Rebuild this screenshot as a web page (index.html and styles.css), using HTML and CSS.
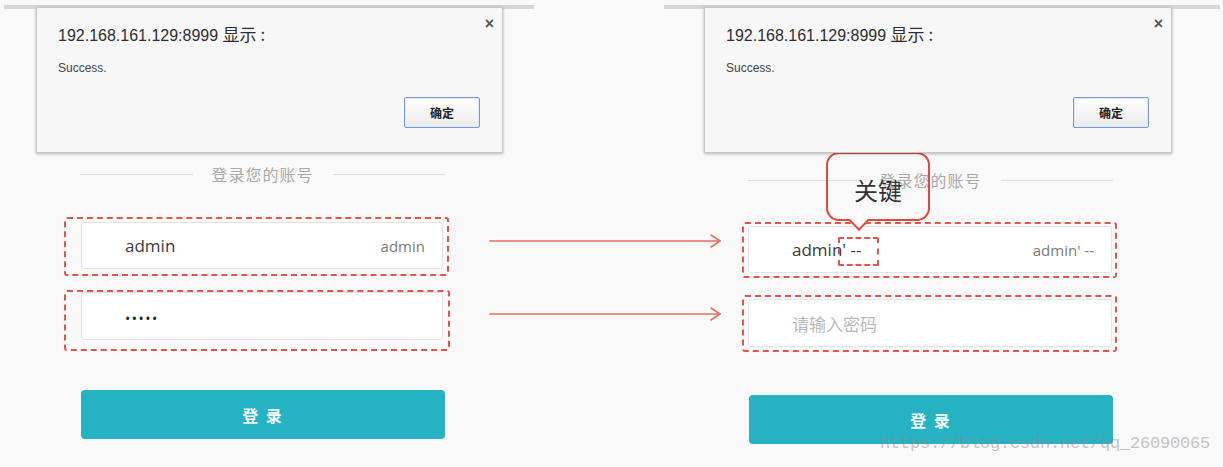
FILE: index.html
```html
<!DOCTYPE html>
<html lang="zh-CN">
<head>
<meta charset="utf-8">
<title>SQL 注入演示</title>
<link rel="stylesheet" href="styles.css">
</head>
<body>
<div class="stage">
  <section class="panel panel-left">
    <div class="topbar"></div>
    <div class="form form-left">
      <div class="heading"><span class="rule"></span><span class="heading-text">登录您的账号</span><span class="rule"></span></div>
      <div class="mark mark-l1">
        <div class="field"><span class="value">admin</span><span class="echo">admin</span></div>
      </div>
      <div class="mark mark-l2">
        <div class="field"><span class="dots">•••••</span></div>
      </div>
      <button class="login login-left">登 录</button>
    </div>
    <div class="dialog dialog-left">
      <span class="close">×</span>
      <div class="dlg-title">192.168.161.129:8999 <span class="cjk">显示 :</span></div>
      <div class="dlg-msg">Success.</div>
      <div class="dlg-actions"><button class="ok">确定</button></div>
    </div>
  </section>

  <section class="panel panel-right">
    <div class="topbar topbar-right"></div>
    <div class="form form-right">
      <div class="heading"><span class="rule"></span><span class="heading-text">登录您的账号</span><span class="rule"></span></div>
      <div class="mark mark-r">
        <div class="field"><span class="value">admin' --</span><span class="echo">admin' --</span><span class="key-box"></span></div>
      </div>
      <div class="mark mark-r mark-r2">
        <div class="field"><span class="placeholder">请输入密码</span></div>
      </div>
      <button class="login login-right">登 录</button>
    </div>
    <div class="callout">关键</div>
    <div class="dialog dialog-right">
      <span class="close">×</span>
      <div class="dlg-title">192.168.161.129:8999 <span class="cjk">显示 :</span></div>
      <div class="dlg-msg">Success.</div>
      <div class="dlg-actions"><button class="ok">确定</button></div>
    </div>
  </section>

  <svg class="arrows" width="240" height="100" viewBox="0 0 240 100">
    <g fill="none" stroke="#e2705f" stroke-width="1.6" stroke-linecap="round" stroke-linejoin="round">
      <path d="M2 11 H232"/>
      <path d="M223 5 L232 11 L223 17"/>
      <path d="M2 84 H232"/>
      <path d="M223 78 L232 84 L223 90"/>
    </g>
  </svg>

  <div class="watermark">https://blog.csdn.net/qq_26090065</div>
</div>
</body>
</html>
```

FILE: styles.css
```css
html, body {
  margin: 0;
  padding: 0;
}
body {
  background: #f9f9f9;
  font-family: "Noto Sans", "Noto Sans CJK SC", sans-serif;
  width: 1223px;
  height: 467px;
  overflow: hidden;
}
.stage {
  position: relative;
  display: flex;
  height: 467px;
}
.panel {
  position: relative;
  height: 467px;
}
.panel-left {
  width: 540px;
}
.panel-right {
  width: 560px;
  margin-left: 123px;
}
.topbar {
  height: 4px;
  margin: 5px 6px 0 4px;
  background: #d5d5d5;
}
.topbar-right {
  margin: 5px 3px 0 1px;
}

/* form */
.form {
  width: 364px;
  display: flex;
  flex-direction: column;
}
.form-left {
  margin-left: 81px;
  padding-top: 155px;
}
.form-right {
  margin-left: 86px;
  padding-top: 161px;
}
.heading {
  display: flex;
  align-items: center;
  gap: 19px;
  height: 20px;
  margin-left: -1px;
}
.rule {
  flex: 1;
  height: 1px;
  background: #dcdcdc;
}
.heading-text {
  font-family: "Noto Sans CJK SC", sans-serif;
  font-size: 16px;
  color: #a9a9a9;
  line-height: 20px;
  letter-spacing: 1px;
}

.mark {
  box-sizing: border-box;
  border: 2px dashed #e25548;
  border-radius: 3px;
}
.mark-l1 {
  width: 385px;
  margin: 33px 0 0 -17px;
  padding: 3px 4px 5px 15px;
}
.mark-l2 {
  width: 386px;
  margin: 14px 0 0 -17px;
  padding: 0 5px 9px 15px;
}
.mark-r {
  width: 375px;
  margin: 32px 0 0 -7px;
  padding: 2px 3px 3px 4px;
}
.mark-r2 {
  margin-top: 17px;
}

.field {
  position: relative;
  box-sizing: border-box;
  height: 47px;
  background: #ffffff;
  border: 1px solid #e3e3e3;
  border-radius: 3px;
  display: flex;
  align-items: center;
  padding: 0 17px 0 43px;
  font-family: "Open Sans", "Noto Sans", sans-serif;
}
.mark-l2 .field,
.mark-r2 .field {
  height: 48px;
}
.value {
  font-size: 17px;
  color: #3a3a3a;
}
.echo {
  margin-left: auto;
  font-size: 15px;
  color: #7a7a7a;
}
.dots {
  font-size: 14px;
  line-height: 14px;
  color: #222;
  letter-spacing: 1.5px;
  padding-top: 5px;
}
.placeholder {
  font-family: "Noto Sans CJK SC", sans-serif;
  font-size: 17px;
  color: #b9b9b9;
}
.key-box {
  position: absolute;
  left: 89px;
  top: 10px;
  width: 37px;
  height: 25px;
  border: 2px dashed #e25548;
  border-radius: 2px;
}

.login {
  width: 364px;
  height: 49px;
  border: none;
  border-radius: 4px;
  background: #25b2c2;
  color: #f2fbfc;
  font-family: "Noto Sans CJK SC", sans-serif;
  font-size: 16px;
  font-weight: bold;
  letter-spacing: 2px;
  padding: 0;
}
.login-left {
  margin-top: 39px;
}
.login-right {
  margin-top: 43px;
}

/* annotation callout */
.callout {
  position: absolute;
  left: 163px;
  top: 152px;
  box-sizing: border-box;
  width: 104px;
  height: 69px;
  border: 2px solid #df4a3d;
  border-radius: 13px;
  font-family: "Noto Sans CJK SC", sans-serif;
  font-size: 24px;
  color: #333;
  display: flex;
  align-items: center;
  justify-content: center;
  padding: 6px 0 0 0;
}
.callout::after {
  content: "";
  position: absolute;
  left: 24px;
  bottom: -9px;
  width: 12px;
  height: 12px;
  background: #ffffff;
  border-right: 2px solid #df4a3d;
  border-bottom: 2px solid #df4a3d;
  transform: rotate(45deg);
}

/* alert dialog */
.dialog {
  position: absolute;
  top: 7px;
  box-sizing: border-box;
  height: 146px;
  background: #f7f7f7;
  border: 1px solid #c6c6c6;
  box-shadow: 0 1px 3px rgba(0, 0, 0, 0.28);
  padding: 16px 22px 0 21px;
  font-family: "Liberation Sans", Arial, "Noto Sans CJK SC", sans-serif;
  display: flex;
  flex-direction: column;
}
.dialog-left {
  left: 36px;
  width: 467px;
}
.dialog-right {
  left: 41px;
  width: 468px;
}
.close {
  position: absolute;
  top: 7px;
  right: 8px;
  font-size: 16px;
  font-weight: bold;
  color: #555;
}
.dlg-title {
  font-size: 16px;
  color: #2e2e2e;
  line-height: 20px;
  height: 20px;
}
.cjk {
  font-family: "Noto Sans CJK SC", sans-serif;
  font-size: 17px;
  line-height: 20px;
}
.dlg-msg {
  margin-top: 16px;
  font-size: 12px;
  color: #444;
  line-height: 16px;
}
.dlg-actions {
  display: flex;
  justify-content: flex-end;
  margin-top: 21px;
}
.ok {
  width: 76px;
  height: 31px;
  border: 1px solid #7a98cc;
  border-radius: 2px;
  background: linear-gradient(#ffffff, #ececec);
  font-family: "Noto Sans CJK SC", sans-serif;
  font-size: 12px;
  font-weight: bold;
  color: #222;
  padding: 0;
  box-shadow: inset 0 0 0 1px #dfe8f6;
}

.arrows {
  position: absolute;
  left: 488px;
  top: 230px;
}

.watermark {
  position: absolute;
  left: 880px;
  top: 434px;
  font-family: "Liberation Mono", monospace;
  font-size: 17px;
  color: rgba(140, 140, 140, 0.5);
  letter-spacing: -0.2px;
}
```
